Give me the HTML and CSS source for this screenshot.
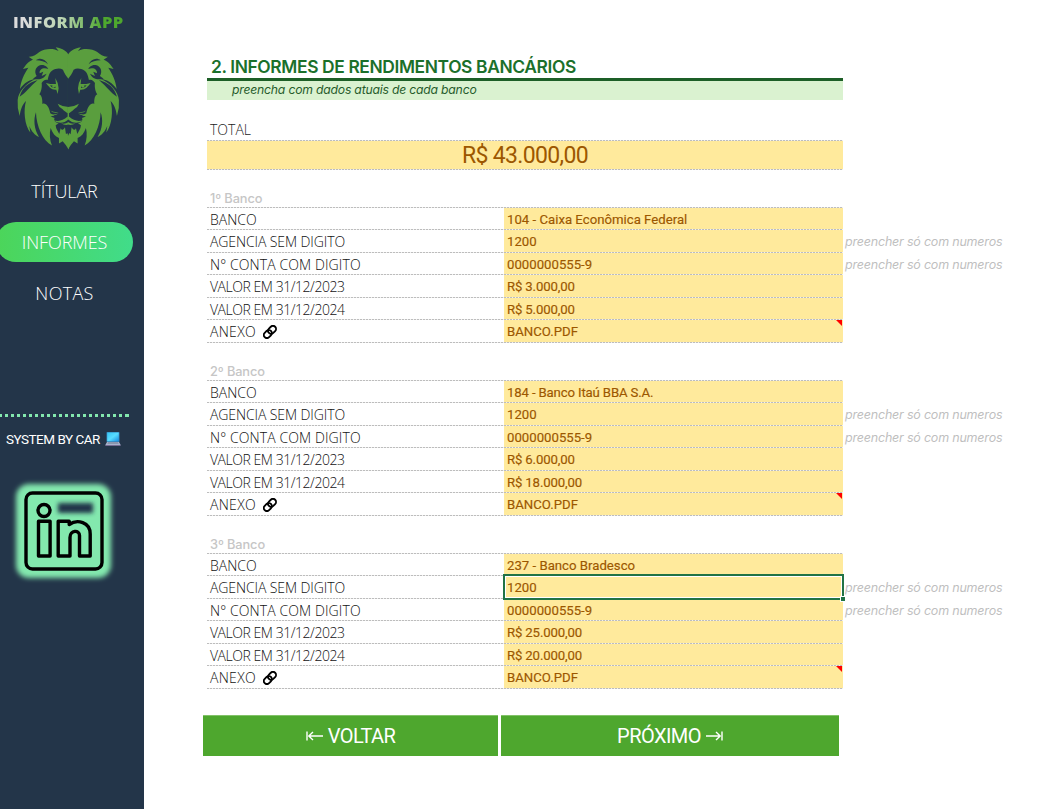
FILE: index.html
```html
<!DOCTYPE html>
<html lang="pt-BR">
<head>
<meta charset="utf-8">
<title>Inform App</title>
<link rel="stylesheet" href="styles.css">
</head>
<body>
<svg class="defs" width="0" height="0">
  <symbol id="link" viewBox="0 0 16 16">
    <g fill="none" stroke="#000" stroke-width="2.1" transform="rotate(-45 8 8)">
      <rect x="-.4" y="4.4" width="10" height="7" rx="3.5"/>
      <rect x="6.4" y="4.4" width="10" height="7" rx="3.5"/>
    </g>
  </symbol>
</svg>
<div class="app">
  <aside class="sidebar">
    <div class="brand">INFORM APP</div>
    <svg class="lion" viewBox="48 138 314 314">
      <defs>
        <g id="half">
          <path class="g" d="M206 164 C200 155 190 145 167 142 L176 153 C160 143 132 146 118 156 C108 164 100 171 86 170 L99 179 C84 184 76 197 69 207 L85 203 C72 222 62 244 60 267 C72 248 88 239 108 236 C76 250 55 276 53 300 Q51 325 59 348 C62 326 68 313 78 303 C70 330 73 375 91 398 L88 378 C95 395 104 405 117 411 C102 387 100 358 108 337 C109 378 128 422 156 437 C149 420 148 400 152 384 C158 400 165 410 177 414 L177 431 L188 424 Q197 433 206 449Z"/>
          <path class="d" d="M206 237 C199 228 192 218 189 209 C179 203 166 206 158 211 C150 215 145 228 143 240 C137 237 129 241 125 249 C127 264 122 278 118 283 C124 285 128 296 127 312 C137 307 147 320 151 340 L163 347 L152 350 L164 354 C160 361 166 368 176 370 L167 376 C168 388 174 394 178 402 L182 385 C187 393 191 389 195 382 L198 403 L202 399 L206 408Z"/>
          <path class="d" d="M108 181 C120 171 137 178 144 193 C134 184 123 181 108 181Z"/>
          <path class="d" d="M110 228 C101 215 108 197 123 195 C137 194 143 203 145 207 C130 201 117 208 119 220 L130 215 L125 228 L140 221 C132 237 119 240 99 236Z"/>
          <path class="d" d="M59 290 C66 264 84 248 113 240 C91 259 75 281 59 290Z"/>
          <path class="g" d="M138 249 L151 252 L168 252 L166 234 Q176 250 176 265 L173 282 L169 269 C155 271 146 260 138 249Z"/>
          <path class="d" d="M150 256 L165 258 L167 264 Q155 266 150 256Z"/><circle class="g" cx="161" cy="259" r="4"/>
          <path class="g" d="M206 321 L188 318 L173 311 Q177 322 187 327 C193 334 199 336 203 340 L203 350 C188 364 175 365 160 361 C175 372 192 371 206 358Z"/>
          <path class="g" d="M151 332 Q161 338 176 337 Q161 342 151 332Z M149 344 Q163 345 176 341 Q163 350 149 344Z"/>
          <path class="g" d="M183 370 Q195 374 206 366 L206 374 Q195 378 183 370Z"/>
        </g>
      </defs>
      <use href="#half"/><use href="#half" transform="translate(410 0) scale(-1 1)"/>
    </svg>
    <nav class="menu">
      <a>TÍTULAR</a>
      <a class="active">INFORMES</a>
      <a>NOTAS</a>
    </nav>
    <div class="dots"></div>
    <div class="credit"><span>SYSTEM BY CAR</span>
      <svg width="16" height="16" viewBox="0 0 16 16">
        <defs><linearGradient id="scr" x2="1" y2="1"><stop stop-color="#36c5f5"/><stop offset=".5" stop-color="#58dcff"/><stop offset="1" stop-color="#168ce0"/></linearGradient></defs>
        <rect x="1.5" y="1" width="13" height="10" rx=".8" fill="#357fb5"/><rect x="2.2" y="1.5" width="11.6" height="8.8" fill="url(#scr)"/>
        <path d="M2 11h12l1.7 3H.3z" fill="#a9b4cc"/><path d="M3 11.5h10l.6 1H2.4z" fill="#6f7890"/><path d="M.3 14h15.4v1H.3z" fill="#746b91"/>
      </svg>
    </div>
    <svg class="linkedin" viewBox="0 0 110 110">
      <defs><filter id="soft" x="-20%" y="-20%" width="140%" height="140%"><feGaussianBlur stdDeviation="2.6"/></filter>
      <filter id="soft2" x="-20%" y="-60%" width="140%" height="220%"><feGaussianBlur stdDeviation="2"/></filter></defs>
      <rect x="8" y="7" width="95" height="94" rx="13" fill="#83e8ae" filter="url(#soft)"/>
      <rect x="50" y="26" width="35" height="10" rx="1" fill="#233549" filter="url(#soft2)"/>
      <g fill="none" stroke="#000" stroke-width="3.4" stroke-linejoin="round">
        <rect x="18" y="16" width="76" height="76" rx="6.5"/>
        <circle cx="36" cy="33.5" r="6"/>
        <path d="M30.500 44.300h11.600v34.700H30.500zM50.200 44.300h11V47.500c8-5.700 21-2.500 21 9.500v22H71.500V58.500c0-6-9.500-5.500-9.500 2v18.500H50.200z"/>
      </g>
    </svg>
  </aside>
  <main class="content">
    <h1>2. INFORMES DE RENDIMENTOS BANCÁRIOS</h1>
    <p class="subtitle">preencha com dados atuais de cada banco</p>
    <div class="total-label">TOTAL</div>
    <div class="total">R$ 43.000,00</div>

    <section class="bank">
      <h2>1º Banco</h2>
      <div class="row"><span>BANCO</span><b>104 - Caixa Econômica Federal</b></div>
      <div class="row"><span class="agency">AGENCIA SEM DIGITO</span><b>1200</b><i>preencher só com numeros</i></div>
      <div class="row"><span class="account">N° CONTA COM DIGITO</span><b>0000000555-9</b><i>preencher só com numeros</i></div>
      <div class="row"><span class="value">VALOR EM 31/12/2023</span><b class="money">R$ 3.000,00</b></div>
      <div class="row"><span class="value">VALOR EM 31/12/2024</span><b class="money">R$ 5.000,00</b></div>
      <div class="row"><span class="attach">ANEXO <svg class="clip"><use href="#link"/></svg></span><b class="note">BANCO.PDF</b></div>
    </section>
    <section class="bank">
      <h2>2º Banco</h2>
      <div class="row"><span>BANCO</span><b class="tight">184 - Banco Itaú BBA S.A.</b></div>
      <div class="row"><span class="agency">AGENCIA SEM DIGITO</span><b>1200</b><i>preencher só com numeros</i></div>
      <div class="row"><span class="account">N° CONTA COM DIGITO</span><b>0000000555-9</b><i>preencher só com numeros</i></div>
      <div class="row"><span class="value">VALOR EM 31/12/2023</span><b class="money">R$ 6.000,00</b></div>
      <div class="row"><span class="value">VALOR EM 31/12/2024</span><b class="money">R$ 18.000,00</b></div>
      <div class="row"><span class="attach">ANEXO <svg class="clip"><use href="#link"/></svg></span><b class="note">BANCO.PDF</b></div>
    </section>
    <section class="bank">
      <h2>3º Banco</h2>
      <div class="row"><span>BANCO</span><b>237 - Banco Bradesco</b></div>
      <div class="row"><span class="agency">AGENCIA SEM DIGITO</span><b class="selected">1200</b><i>preencher só com numeros</i></div>
      <div class="row"><span class="account">N° CONTA COM DIGITO</span><b>0000000555-9</b><i>preencher só com numeros</i></div>
      <div class="row"><span class="value">VALOR EM 31/12/2023</span><b class="money">R$ 25.000,00</b></div>
      <div class="row"><span class="value">VALOR EM 31/12/2024</span><b class="money">R$ 20.000,00</b></div>
      <div class="row"><span class="attach">ANEXO <svg class="clip"><use href="#link"/></svg></span><b class="note">BANCO.PDF</b></div>
    </section>

    <div class="actions">
      <button><svg width="17" height="12" viewBox="0 0 17 12"><path d="M1 1.500v9M2.500 6H17M7 2L2.800 6L7 10"/></svg><span>VOLTAR</span></button>
      <button><span>PRÓXIMO</span><svg width="17" height="12" viewBox="0 0 17 12"><path d="M16 1.500v9M14.500 6H0M10 2l4.200 4L10 10"/></svg></button>
    </div>
  </main>
</div>
</body>
</html>
```
FILE: styles.css
```css
* { box-sizing: border-box; }
body { margin: 0; background: #fff; font-family: Roboto, sans-serif; --dash: repeating-linear-gradient(90deg, #bdbdbd 0 2px, #f0f0f0 2px 3px); }
.defs { display: block; }
.app { display: flex; width: 1039px; height: 809px; overflow: hidden; }

.sidebar { width: 144px; flex: none; background: #233549; color: #fff; overflow: hidden; }
.brand {
  width: 112px; margin: 12px 0 0 13px; height: 20px;
  font: 800 16.5px/20px "Open Sans", sans-serif; white-space: nowrap; letter-spacing: .5px;
  background: linear-gradient(90deg, #dcdcdc 10%, #b9d4b0 45%, #4ea72e 80%);
  -webkit-background-clip: text; background-clip: text; color: transparent;
}
.lion { display: block; width: 104.6px; height: 104.6px; margin: 14px 0 0 16px; }
.g { fill: #5a9e3e; }
.d { fill: #233549; }
.menu { display: flex; flex-direction: column; gap: 11px; margin-top: 20px; }
.menu a {
  width: 137px; height: 40px; margin-left: -4px; border-radius: 20px;
  display: flex; align-items: center; justify-content: center;
  font: 300 18px/40px "Open Sans", sans-serif; letter-spacing: -.1px;
}
.menu .active { background: linear-gradient(90deg, #4cd559, #41dc8a); }
.menu a:last-child { letter-spacing: .3px; }
.dots { width: 129px; height: 3px; margin-top: 101px; background: repeating-linear-gradient(90deg, #83e8ae 0 3px, transparent 3px 6px); background-position: -1px 0; }
.credit { display: flex; align-items: center; gap: 5px; height: 20px; margin: 12px 0 0 6px; font-size: 13.5px; letter-spacing: -.5px; white-space: nowrap; }
.linkedin { display: block; width: 110px; height: 110px; margin: 28px 0 0 8px; }

.content { padding: 54px 0 0 63px; width: 895px; }
h1 {
  width: 636px; height: 27px; margin: 0; padding-left: 4px; border-bottom: 3px solid #1d5f27;
  font: 600 17.4px/25px Inter, sans-serif; letter-spacing: -.38px; color: #1b702b; white-space: nowrap;
}
.subtitle { width: 636px; height: 19px; margin: 0; padding-left: 25px; background: #daf2d0; color: #275c2c; font: italic 400 12.2px/18px Inter, sans-serif; letter-spacing: -.2px; }
.total-label { height: 40px; padding: 20px 0 0 3px; font: 300 14px/20px "Open Sans", sans-serif; color: #222; }
.total {
  width: 636px; height: 30px; padding-top: 1px;
  background: var(--dash) 0 0 / 100% 1px no-repeat, var(--dash) 0 100% / 100% 1px no-repeat, #ffea9c;
  color: #9c5700; text-align: center; font-size: 23px; line-height: 30px; letter-spacing: -.65px;
}
.bank { margin-top: 20px; height: 153px; }
.bank h2 { width: 636px; height: 18px; margin: 0; padding-left: 3px; background: var(--dash) 0 100% / 100% 1px no-repeat; font: 500 12.8px/18px Inter, sans-serif; letter-spacing: -.1px; color: #c6c6c6; }
.row { display: grid; grid-template-columns: 297px 339px 1fr; grid-template-rows: 100%; height: 22px; line-height: 23px; }
.row:nth-child(odd) { height: 23px; line-height: 24px; }
.row span, .row b { white-space: nowrap; min-height: 0; }
.row span { padding-left: 3px; background: var(--dash) 0 100% / 100% 1px no-repeat; font-family: "Open Sans", sans-serif; font-weight: 300; font-size: 14px; color: #111; }
.row .agency { letter-spacing: -.1px; }
.row .account { letter-spacing: .1px; }
.row .value { letter-spacing: -.46px; }
.row .attach { letter-spacing: .3px; }
.row b { position: relative; padding-left: 3px; background: var(--dash) 0 100% / 100% 1px no-repeat, #ffea9c; color: #9c5700; font-family: Roboto, sans-serif; font-weight: 400; font-size: 13.2px; -webkit-text-stroke: .15px #9c5700; }
.row .money { letter-spacing: -.15px; }
.row .tight { letter-spacing: -.15px; }
.row i { padding-left: 2px; color: #bfbfbf; font-family: Inter, sans-serif; font-size: 12.5px; font-weight: 400; letter-spacing: -.2px; white-space: nowrap; }
.clip { display: inline-block; width: 14px; height: 14px; margin-left: 3px; vertical-align: -2px; overflow: visible; }
.note::after { content: ""; position: absolute; top: 0; right: 1px; border-top: 6px solid #f00; border-left: 6px solid transparent; }
.selected { z-index: 1; }
.selected::before { content: ""; position: absolute; inset: -2px -1px -1px -1px; border: 2px solid #217346; box-shadow: inset 0 0 0 1px #fff; }
.selected::after { content: ""; position: absolute; right: -2px; bottom: -2px; width: 4px; height: 4px; background: #217346; outline: 1px solid #fff; }

.actions { display: grid; grid-template-columns: 295px 338px; gap: 3px; margin: 26px 0 0 -4px; }
.actions button {
  height: 41px; padding: 0; border: 0; border-top: 1px solid #82c268; background: #4ea72e; color: #fff;
  display: flex; align-items: center; justify-content: center; gap: 5px; font: 400 20px/40px Roboto, sans-serif; letter-spacing: -.55px;
}
.actions path { fill: none; stroke: #fff; stroke-width: 1.4; }
```
